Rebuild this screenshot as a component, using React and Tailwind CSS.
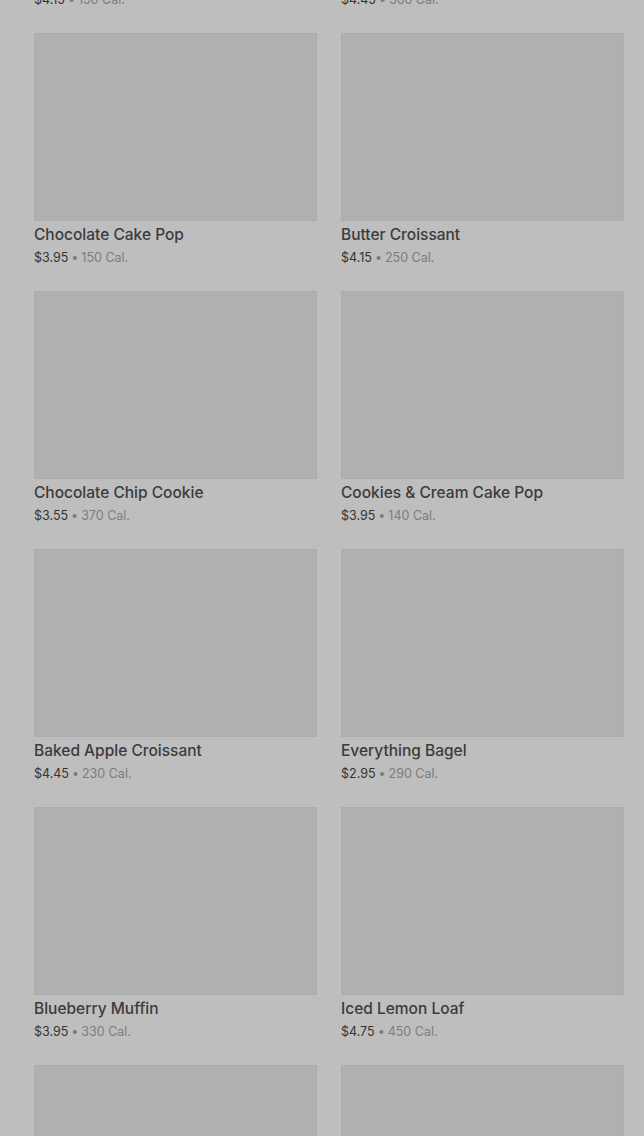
import React from "react";

const items = [
  { name: "Vanilla Bean Custard Danish", price: "$4.15", cal: "150 Cal." },
  { name: "Cheese Danish", price: "$4.45", cal: "360 Cal." },
  { name: "Chocolate Cake Pop", price: "$3.95", cal: "150 Cal." },
  { name: "Butter Croissant", price: "$4.15", cal: "250 Cal." },
  { name: "Chocolate Chip Cookie", price: "$3.55", cal: "370 Cal." },
  { name: "Cookies & Cream Cake Pop", price: "$3.95", cal: "140 Cal." },
  { name: "Baked Apple Croissant", price: "$4.45", cal: "230 Cal." },
  { name: "Everything Bagel", price: "$2.95", cal: "290 Cal." },
  { name: "Blueberry Muffin", price: "$3.95", cal: "330 Cal." },
  { name: "Iced Lemon Loaf", price: "$4.75", cal: "450 Cal." },
  { name: "Plain Bagel", price: "$2.75", cal: "280 Cal." },
  { name: "Banana Nut Bread", price: "$3.95", cal: "420 Cal." },
];

const ProductCard = ({ name, price, cal }) => (
  <div className="flex flex-col">
    <div className="h-[188px] bg-[#b0b0b0] border border-[#adadad]" />
    <p className="mt-[4px] text-[15.5px] leading-[20px] font-medium text-[#3b3b3b]">
      {name}
    </p>
    <p className="mt-[4px] text-[12.5px] leading-[18px] text-[#7c7c7c]">
      <span className="text-[#343434]">{price}</span>
      <span className="mx-[3px]">•</span>
      {cal}
    </p>
  </div>
);

export default function App() {
  return (
    <div
      className="h-[1136px] w-[644px] overflow-hidden bg-[#bebebe]"
      style={{ fontFamily: "Inter, Roboto, 'Noto Sans', sans-serif" }}
    >
      <div className="mt-[-225px] pl-[34px] pr-[20px] grid grid-cols-2 gap-x-[24px] gap-y-[24px]">
        {items.map((item) => (
          <ProductCard key={item.name} {...item} />
        ))}
      </div>
    </div>
  );
}
